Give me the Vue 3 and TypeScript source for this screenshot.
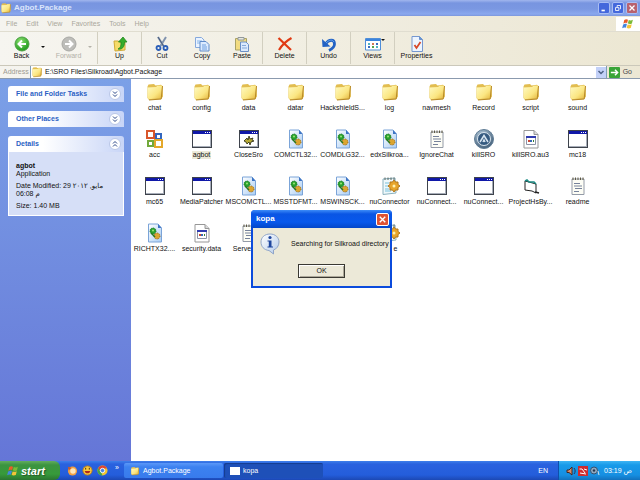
<script setup lang="ts">
import { ref } from 'vue'

interface Tool {
  label: string
  icon: string
  arrow?: boolean
  disabled?: boolean
}

interface FileItem {
  name: string
  icon: string
  place?: string
}

const menus = ['File', 'Edit', 'View', 'Favorites', 'Tools', 'Help']

const groups: Tool[][] = [
  [
    { label: 'Back', icon: 'back', arrow: true },
    { label: 'Forward', icon: 'forward', arrow: true, disabled: true },
  ],
  [{ label: 'Up', icon: 'up' }],
  [
    { label: 'Cut', icon: 'cut' },
    { label: 'Copy', icon: 'copy' },
    { label: 'Paste', icon: 'paste' },
  ],
  [{ label: 'Delete', icon: 'delete' }],
  [{ label: 'Undo', icon: 'undo' }],
  [{ label: 'Views', icon: 'views', arrow: true }],
  [{ label: 'Properties', icon: 'properties' }],
]

const files: FileItem[] = [
  { name: 'chat', icon: 'folder' },
  { name: 'config', icon: 'folder' },
  { name: 'data', icon: 'folder' },
  { name: 'datar', icon: 'folder' },
  { name: 'HackshieldS...', icon: 'folder' },
  { name: 'log', icon: 'folder' },
  { name: 'navmesh', icon: 'folder' },
  { name: 'Record', icon: 'folder' },
  { name: 'script', icon: 'folder' },
  { name: 'sound', icon: 'folder' },
  { name: 'acc', icon: 'office' },
  { name: 'agbot', icon: 'program' },
  { name: 'CloseSro', icon: 'closer' },
  { name: 'COMCTL32...', icon: 'dll' },
  { name: 'COMDLG32...', icon: 'dll' },
  { name: 'edxSilkroa...', icon: 'dll' },
  { name: 'IgnoreChat', icon: 'note' },
  { name: 'killSRO', icon: 'autoit' },
  { name: 'killSRO.au3', icon: 'unknown' },
  { name: 'mc18', icon: 'program' },
  { name: 'mc65', icon: 'program' },
  { name: 'MediaPatcher', icon: 'program' },
  { name: 'MSCOMCTL...', icon: 'dll' },
  { name: 'MSSTDFMT...', icon: 'dll' },
  { name: 'MSWINSCK...', icon: 'dll' },
  { name: 'nuConnector', icon: 'config' },
  { name: 'nuConnect...', icon: 'program' },
  { name: 'nuConnect...', icon: 'program' },
  { name: 'ProjectHsBy...', icon: 'project' },
  { name: 'readme', icon: 'note' },
  { name: 'RICHTX32....', icon: 'dll' },
  { name: 'security.data', icon: 'unknown' },
  { name: 'Serve', icon: 'note', place: 'lead' },
  { name: 'e', icon: 'config', place: 'trail' },
]

const selected = ref('agbot')
const address = ref('E:\\SRO Files\\Silkroad\\Agbot.Package')
const dialogOpen = ref(true)
</script>

<template>
  <div class="screen">
    <svg class="sprites" aria-hidden="true">
      <defs>
        <linearGradient id="gFolder" x1="0" y1="0" x2="1" y2="1">
          <stop offset="0" stop-color="#fffbc4" />
          <stop offset="0.6" stop-color="#fbe682" />
          <stop offset="1" stop-color="#e3b53c" />
        </linearGradient>
        <radialGradient id="gGreen" cx="0.4" cy="0.3" r="0.7">
          <stop offset="0" stop-color="#8be070" />
          <stop offset="1" stop-color="#1f9a1c" />
        </radialGradient>
        <linearGradient id="gPage" x1="0" y1="0" x2="1" y2="1">
          <stop offset="0" stop-color="#ffffff" />
          <stop offset="1" stop-color="#a9cdf4" />
        </linearGradient>
        <radialGradient id="gSteel" cx="0.4" cy="0.3" r="0.8">
          <stop offset="0" stop-color="#b9cfe0" />
          <stop offset="1" stop-color="#37536e" />
        </radialGradient>
        <linearGradient id="gBubble" x1="0" y1="0" x2="1" y2="1">
          <stop offset="0" stop-color="#ffffff" />
          <stop offset="1" stop-color="#b4cbea" />
        </linearGradient>
        <symbol id="folder" viewBox="0 0 20 20">
          <path d="M2.500 4.500L3.500 2.500L9 2L10.500 3.500L16 2.800L17.500 4L18 14.500L16 17.200L4 18L2.500 16Z" fill="#e2bd50" />
          <path d="M2.500 5.500L11 5L12.500 3.800L17 3.600L16.500 15.800L4 17.300L2.700 16Z" fill="url(#gFolder)" />
          <path d="M17.500 4L16.200 17L4 18" fill="none" stroke="#b88a27" />
        </symbol>
        <symbol id="program" viewBox="0 0 20 20">
          <path d="M0 1H20V19H0Z" fill="#3e434c" />
          <path d="M1 2H19V18H1Z" fill="#a7adb8" />
          <path d="M1 5H18V17H1Z" fill="#fff" />
          <path d="M1 2H19V5H1Z" fill="#1018a8" />
          <path d="M13 3h1v1h-1zM15 3h1v1h-1zM17 3h1v1h-1z" fill="#fff" />
        </symbol>
        <symbol id="closer" viewBox="0 0 20 20">
          <use href="#program" />
          <path d="M5 12L8 9L9 11L10 7L11 10L14 9L13 11L15 12L12 13L11 16L10 13L8 15L7 13Z" fill="#b5aa35" stroke="#24240c" stroke-width="0.800" />
        </symbol>
        <symbol id="dll" viewBox="0 0 20 20">
          <path d="M3.500 1H13L16.500 5V19H3.500Z" fill="url(#gPage)" stroke="#7ba4d8" />
          <path d="M13 1V5H16.500Z" fill="#3d74c4" />
          <circle cx="8" cy="8" r="3" fill="#28a22c" stroke="#146c23" stroke-dasharray="1 1" />
          <circle cx="12" cy="13" r="3" fill="#dca530" stroke="#8e6115" stroke-dasharray="1 1" />
          <circle cx="8" cy="7.500" r="1" fill="#9ee37a" />
          <path d="M6 10L10 14" stroke="#26781f" stroke-width="1.500" />
        </symbol>
        <symbol id="office" viewBox="0 0 20 20">
          <g fill="none" stroke-width="2">
            <rect x="2" y="2" width="7" height="7" stroke="#d8562b" />
            <rect x="11" y="5" width="5" height="5" stroke="#3266be" />
            <rect x="3" y="12" width="5" height="5" stroke="#72a93b" />
            <rect x="10" y="11" width="7" height="7" stroke="#e4a82b" />
          </g>
        </symbol>
        <symbol id="note" viewBox="0 0 20 20">
          <path d="M4 3H16V18.500H4Z" fill="#fdfdf5" stroke="#949ba7" />
          <path d="M5 1.500V4M7.500 1.500V4M10 1.500V4M12.500 1.500V4M15 1.500V4" stroke="#5c5741" />
          <path d="M6 7.500H12M6 10H14M7 12.500H14M6 15.500H11" stroke="#76829b" />
        </symbol>
        <symbol id="autoit" viewBox="0 0 20 20">
          <circle cx="10" cy="10" r="9.500" fill="url(#gSteel)" stroke="#607d96" />
          <circle cx="10" cy="10" r="6.500" fill="#355a80" stroke="#dbe6ef" />
          <path d="M6 13L10 6.500L14 13M9 13L10 11L11 13" fill="none" stroke="#d8e5f0" stroke-width="1.500" />
        </symbol>
        <symbol id="unknown" viewBox="0 0 20 20">
          <path d="M3 1.500H13L17 5.500V19H3Z" fill="#fff" stroke="#979797" />
          <path d="M13 1.500V5.500H17" fill="#d9d9d9" stroke="#979797" />
          <path d="M5.500 7.500H14.500V15.500H5.500Z" fill="#fff" stroke="#8c93a6" />
          <path d="M5 7H15V9H5Z" fill="#303baf" />
          <path d="M7 11h2v2H7z" fill="#ca4937" />
          <path d="M9 11h2v2H9z" fill="#3468b8" />
          <path d="M12 11h1v2h-1z" fill="#397f35" />
        </symbol>
        <symbol id="config" viewBox="0 0 20 20">
          <path d="M3 3L15 2L16 17L3 18.500Z" fill="#eff8fb" stroke="#8ab1bf" />
          <path d="M5 1.500V4M8 1.500V4M11 1.500V4M14 1.500V4" stroke="#5b6661" />
          <path d="M5 7H9M5 10H8M5 13H9M5 15H11" stroke="#79c1dc" />
          <path d="M14 4L15.500 6H18V8.500L20 10L18 11.500V14H15.500L14 16L12.500 14H10V11.500L8 10L10 8.500V6H12.500Z" fill="#e7a52b" stroke="#af761d" />
          <circle cx="14" cy="10" r="1.500" fill="#fff1b0" />
        </symbol>
        <symbol id="project" viewBox="0 0 20 20">
          <path d="M4 5L8 6L15 8V17L11 15L4 14Z" fill="#fff" stroke="#222" />
          <path d="M4 5L6 4L8 6L13 6L15 8" fill="none" stroke="#1a8a83" stroke-width="1.500" />
          <path d="M14 16L18 17" stroke="#222" stroke-width="1.500" />
        </symbol>
        <symbol id="back" viewBox="0 0 16 16">
          <circle cx="8" cy="8" r="7" fill="url(#gGreen)" stroke="#4c9f43" />
          <path d="M12 8H5M8 4.500L4.500 8L8 11.500" fill="none" stroke="#fff" stroke-width="2" />
        </symbol>
        <symbol id="forward" viewBox="0 0 16 16">
          <circle cx="8" cy="8" r="7" fill="#bdbdb9" stroke="#a8a8a4" />
          <path d="M4 8H11M8 4.500L11.500 8L8 11.500" fill="none" stroke="#fff" stroke-width="2" />
        </symbol>
        <symbol id="up" viewBox="0 0 16 16">
          <path d="M2 5H6L8 6H13V14L3 15Z" fill="#f5dc69" stroke="#cfaa38" />
          <path d="M6 13C9 12 9 9 9 6H6.500L11 1L15 6H12.500C12.500 11 10 14 6 13Z" fill="#35ad2b" stroke="#218820" stroke-width="0.800" />
        </symbol>
        <symbol id="cut" viewBox="0 0 16 16">
          <path d="M4 1L9.500 10M12 1L6.500 10" stroke="#8193ae" stroke-width="2" />
          <path d="M4 1L9.500 10" stroke="#4a5d7c" />
          <circle cx="4.500" cy="12" r="2" fill="none" stroke="#2b5fb8" stroke-width="1.800" />
          <circle cx="11.500" cy="12" r="2" fill="none" stroke="#2b5fb8" stroke-width="1.800" />
        </symbol>
        <symbol id="copy" viewBox="0 0 16 16">
          <path d="M1.500 1.500H7.500L10 4V11.500H1.500Z" fill="#eaf3ff" stroke="#86a9dc" />
          <path d="M3 5H8M3 7H8" stroke="#86b6eb" />
          <path d="M6 5.500H12L15 8.500V15H6Z" fill="#dcebff" stroke="#5f8bc9" />
          <path d="M8 9H12M8 11H13M8 13H13" stroke="#6ea0df" />
        </symbol>
        <symbol id="paste" viewBox="0 0 16 16">
          <path d="M1.500 2.500H12.500V14H1.500Z" fill="#f2dc81" stroke="#a9a267" />
          <path d="M4 1.500H10V4H4Z" fill="#e6e7df" stroke="#92999b" />
          <path d="M6.500 6H12L14.500 8.500V15.500H6.500Z" fill="#dbeafd" stroke="#6a8fc6" />
          <path d="M8 9.500H12M8 12H13" stroke="#85a9d8" />
        </symbol>
        <symbol id="delete" viewBox="0 0 16 16">
          <path d="M1.500 2L14 14M14.500 2C9 5 5 9 2 14" fill="none" stroke="#e03a13" stroke-width="2.200" />
        </symbol>
        <symbol id="undo" viewBox="0 0 16 16">
          <path d="M4.500 8C8 3 13.500 3 13.500 8C13.500 11 11 13 8 14.500" fill="none" stroke="#2262c4" stroke-width="2.800" />
          <path d="M1 3L1.500 11L9.500 10.500Z" fill="#2262c4" />
          <path d="M5 7C8 4 11 3 13 6" fill="none" stroke="#65a4ed" />
        </symbol>
        <symbol id="views" viewBox="0 0 16 16">
          <path d="M0.500 2.500H15.500V14H0.500Z" fill="#fff" stroke="#508ed8" />
          <path d="M1 3H15V5H1Z" fill="#3a84dd" />
          <path d="M3 7h2v2H3zM11 10h2v2h-2z" fill="#52b4c4" />
          <path d="M7 7h2v2H7z" fill="#d37656" />
          <path d="M11 7h2v2h-2zM3 10h2v2H3z" fill="#376bc0" />
          <path d="M7 10h2v2H7z" fill="#54a34a" />
        </symbol>
        <symbol id="properties" viewBox="0 0 16 16">
          <path d="M3 0.500H10.500L13.500 3.500V15.500H3Z" fill="#edf5ff" stroke="#7597cf" />
          <path d="M10.500 0.500V3.500H13.500" fill="#6195d8" stroke="#6c91c9" />
          <path d="M5.500 9L7.500 12L11.500 6" fill="none" stroke="#d74929" stroke-width="1.800" />
        </symbol>
        <symbol id="flag" viewBox="0 0 16 16">
          <path d="M3 2.500C5 1 6.500 1.500 8 2.200L6.800 7C5 6.200 4 6.300 1.800 7.500Z" fill="#ea5c2a" />
          <path d="M9 2.600C11 3.500 12.500 3.300 14.500 2.300L13.200 7.200C11 8.300 9.500 8 7.800 7.300Z" fill="#7bbb37" />
          <path d="M1.500 8.700C3.500 7.400 5 7.400 6.500 8L5.200 13C3.500 12.300 2 12.500 0.200 13.500Z" fill="#4386dd" />
          <path d="M7.500 8.500C9.500 9.500 11 9.200 13 8.400L11.700 13.300C9.500 14.300 8 14 6.200 13.300Z" fill="#f4c438" />
        </symbol>
      </defs>
    </svg>

    <header class="titlebar">
      <svg class="i12"><use href="#folder" /></svg>
      <h1>Agbot.Package</h1>
      <button class="cap" aria-label="Minimize">
        <svg viewBox="0 0 12 12"><path d="M3 9H7" stroke="#fff" stroke-width="2" /></svg>
      </button>
      <button class="cap" aria-label="Restore">
        <svg viewBox="0 0 12 12"><path d="M5 5V3H9V7H8M3 5.500H7V9H3Z" fill="none" stroke="#fff" /></svg>
      </button>
      <button class="cap cap-close" aria-label="Close">
        <svg viewBox="0 0 12 12"><path d="M3 3L9 9M9 3L3 9" stroke="#fff" stroke-width="1.500" /></svg>
      </button>
    </header>

    <nav class="menubar">
      <button v-for="m in menus" :key="m">{{ m }}</button>
      <span class="brand"><svg class="i12"><use href="#flag" /></svg></span>
    </nav>

    <div class="toolbar">
      <div v-for="(group, gi) in groups" :key="gi" class="group">
        <button
          v-for="tool in group"
          :key="tool.label"
          class="tool"
          :class="{ off: tool.disabled, wide: gi !== 2, views: tool.icon === 'views' }"
          :disabled="tool.disabled"
        >
          <svg class="i16"><use :href="'#' + tool.icon" /></svg>
          <span>{{ tool.label }}</span>
          <i v-if="tool.arrow" class="drop"></i>
        </button>
      </div>
    </div>

    <div class="address">
      <label for="addr">Address</label>
      <div class="field">
        <svg class="i12"><use href="#folder" /></svg>
        <input id="addr" v-model="address" type="text" spellcheck="false" />
        <button class="combo" aria-label="Show addresses">
          <svg viewBox="0 0 10 10"><path d="M2.500 4L5 6.500L7.500 4" fill="none" stroke="#4d6185" stroke-width="1.500" /></svg>
        </button>
      </div>
      <button class="go">
        <svg viewBox="0 0 12 12">
          <rect width="12" height="12" rx="1" fill="#39a539" />
          <path d="M2 6H9M6.500 3L9.500 6L6.500 9" fill="none" stroke="#fff" stroke-width="1.500" />
        </svg>
        <span>Go</span>
      </button>
    </div>

    <main class="body">
      <aside class="side">
        <section v-for="t in ['File and Folder Tasks', 'Other Places', 'Details']" :key="t" class="panel">
          <button class="head">
            <span>{{ t }}</span>
            <svg viewBox="0 0 12 12">
              <circle cx="6" cy="6" r="5.500" fill="#fff" stroke="#b9c6e6" />
              <path
                :d="t === 'Details' ? 'M4 5.500L6 3.500L8 5.500M4 8.500L6 6.500L8 8.500' : 'M4 3.500L6 5.500L8 3.500M4 6.500L6 8.500L8 6.500'"
                fill="none"
                stroke="#2b4687"
              />
            </svg>
          </button>
          <div v-if="t === 'Details'" class="info">
            <b>agbot</b>
            <p>Application</p>
            <p class="gap">Date Modified: 29 مايو, ٢٠١٢</p>
            <p>06:08 م</p>
            <p class="gap">Size: 1.40 MB</p>
          </div>
        </section>
      </aside>

      <div class="files">
        <button
          v-for="(f, i) in files"
          :key="i"
          class="file"
          :class="[f.place, { selected: f.name === selected }]"
          @click="selected = f.name"
        >
          <svg class="i20"><use :href="'#' + f.icon" /></svg>
          <span>{{ f.name }}</span>
        </button>
      </div>
    </main>

    <footer class="taskbar">
      <button class="start">
        <svg class="i12"><use href="#flag" /></svg>
        <span>start</span>
      </button>
      <div class="quick">
        <svg viewBox="0 0 12 12">
          <circle cx="6" cy="6.500" r="5" fill="#f0a043" />
          <circle cx="6.500" cy="6.500" r="3" fill="#fbe5bb" />
          <path d="M1 2L5 3L2 6Z" fill="#c9592a" />
        </svg>
        <svg viewBox="0 0 12 12">
          <circle cx="6" cy="6" r="5" fill="#f8c83c" stroke="#b97b1c" />
          <path d="M3 6.500H9C9 10 3 10 3 6.500Z" fill="#b02a1c" />
          <path d="M4 3V5M8 3V5" stroke="#43250c" />
        </svg>
        <svg viewBox="0 0 12 12">
          <circle cx="6" cy="6" r="5.500" fill="#f2c62f" />
          <path d="M1.200 3.300A5.500 5.500 0 0 1 11 3.700H6L4 7.500Z" fill="#de4634" />
          <path d="M1.200 3.300L4.500 8L6 11.500A5.500 5.500 0 0 1 1.200 3.300Z" fill="#41a351" />
          <circle cx="6" cy="6" r="2.400" fill="#4684e3" stroke="#fff" />
        </svg>
        <span>»</span>
      </div>
      <button class="task">
        <svg class="i10"><use href="#folder" /></svg>
        <span>Agbot.Package</span>
      </button>
      <button class="task active">
        <svg class="i10" viewBox="0 0 10 10"><path d="M0 1H10V9H0Z" fill="#fff" /></svg>
        <span>kopa</span>
      </button>
      <span class="lang">EN</span>
      <div class="tray">
        <svg viewBox="0 0 10 10">
          <path d="M1 4H3L6 1V9L3 6.500H1Z" fill="#d98b66" stroke="#462722" />
          <path d="M8 2C9.500 4 9.500 6 8 8" fill="none" stroke="#263457" />
        </svg>
        <svg viewBox="0 0 10 10">
          <rect width="10" height="10" fill="#cf2c2f" />
          <path d="M1.500 3H4L7 7M6 3L9 4M2 7L8 8" fill="none" stroke="#fff" />
        </svg>
        <svg viewBox="0 0 10 10">
          <circle cx="4" cy="4.500" r="3.500" fill="#8fa7bf" stroke="#35516f" />
          <circle cx="4" cy="4.500" r="1.200" fill="#26384e" />
          <path d="M8 5L9 9" stroke="#cde1ef" />
        </svg>
        <time>03:19 ص</time>
      </div>
    </footer>

    <div v-if="dialogOpen" class="dialog" role="alertdialog" aria-labelledby="dlg-title">
      <div class="dlg-bar">
        <h2 id="dlg-title">kopa</h2>
        <button class="dlg-x" aria-label="Close" @click="dialogOpen = false">
          <svg viewBox="0 0 12 12"><path d="M3 3L9 9M9 3L3 9" stroke="#fff" stroke-width="1.500" /></svg>
        </button>
      </div>
      <div class="dlg-body">
        <div class="message">
          <svg class="bubble" viewBox="0 0 20 22">
            <path d="M10 1C15.500 1 19 4.500 19 9C19 13 16.500 16 13.500 17V21L9 17.500C4 17 1 13.500 1 9C1 4.500 4.500 1 10 1Z" fill="url(#gBubble)" stroke="#90a5c8" />
            <circle cx="10" cy="4.500" r="1.600" fill="#1e469e" />
            <path d="M7.500 7.500H11.500V13.500H13V14.500H7.500V13.500H8.800V8.500H7.500Z" fill="#1e469e" />
          </svg>
          <p>Searching for Silkroad directory</p>
        </div>
        <button class="ok" @click="dialogOpen = false">OK</button>
      </div>
    </div>
  </div>
</template>

<style>
body {
  margin: 0;
}
</style>

<style scoped>
.screen {
  position: relative;
  display: flex;
  flex-direction: column;
  min-height: 100vh;
  background: #fff;
  color: #111;
  font: 7px/8px "Liberation Sans", "DejaVu Sans", sans-serif;
  overflow: hidden;
}
.sprites {
  position: absolute;
  width: 0;
  height: 0;
}
svg {
  display: block;
  flex: none;
}
button {
  margin: 0;
  padding: 0;
  border: 0;
  background: none;
  color: inherit;
  font: inherit;
}
p, h1, h2 {
  margin: 0;
}
.i10 { width: 10px; height: 10px; }
.i12 { width: 12px; height: 12px; }
.i16 { width: 16px; height: 16px; }
.i20 { width: 20px; height: 20px; }

.titlebar {
  display: flex;
  align-items: center;
  gap: 2px;
  height: 16px;
  padding: 0 2px 0 0;
  background: linear-gradient(#a1b6ee, #7895e0 3px, #7b98e2 9px, #8aa8ee 14px, #7c97dc);
}
.titlebar h1 {
  flex: 1;
  color: #dbe5fb;
  font-size: 8px;
  line-height: 10px;
}
.cap {
  width: 12px;
  height: 12px;
  border: 1px solid #a9bdf3;
  border-radius: 2px;
  background: #4468dc;
}
.cap svg {
  width: 10px;
  height: 10px;
}
.cap-close {
  background: #b8626f;
}

.menubar {
  display: flex;
  align-items: center;
  gap: 9px;
  height: 15px;
  padding-left: 6px;
  background: linear-gradient(90deg, #f5f4ef, #ece7d4);
  color: #aaa89c;
}
.brand {
  display: flex;
  align-items: center;
  justify-content: center;
  width: 24px;
  height: 14px;
  margin-left: auto;
  background: #fff;
}

.toolbar {
  display: flex;
  height: 34px;
  border-top: 1px solid #e0ddd0;
  box-sizing: border-box;
  background: linear-gradient(90deg, #f6f5f0, #ece7d3);
}
.group {
  display: flex;
  align-items: center;
  height: 32px;
}
.group + .group {
  border-left: 1px solid #d2cfc0;
}
.group:first-child {
  gap: 4px;
  padding-right: 7px;
}
.tool {
  position: relative;
  display: flex;
  flex-direction: column;
  align-items: center;
  width: 40px;
}
.tool.wide {
  width: 43px;
}
.off {
  color: #b3b1a8;
}
.drop {
  position: absolute;
  top: 10px;
  right: -2px;
  border: 2px solid transparent;
  border-top-color: currentColor;
}
.views .drop {
  top: 3px;
  right: 9px;
}

.address {
  display: flex;
  align-items: center;
  gap: 2px;
  height: 14px;
  padding: 0 8px 0 3px;
  box-sizing: border-box;
  border-top: 1px solid #cbc8ba;
  border-bottom: 1px solid #8b9aae;
  background: linear-gradient(90deg, #f5f4ef, #ece7d4);
}
.address label {
  width: 25px;
  color: #9c9a90;
}
.field {
  display: flex;
  flex: 1;
  align-items: center;
  gap: 2px;
  border: 1px solid #7f9db9;
  border-width: 0 1px;
  background: #fff;
}
.field input {
  flex: 1;
  min-width: 0;
  height: 12px;
  padding: 0;
  border: 0;
  outline: 0;
  background: none;
  color: #111;
  font: inherit;
  line-height: 12px;
}
.combo {
  width: 10px;
  height: 11px;
  background: #c3d1f8;
}
.combo svg {
  width: 10px;
  height: 10px;
}
.go {
  display: flex;
  align-items: center;
  gap: 3px;
  color: #444;
}
.go svg {
  width: 11px;
  height: 11px;
}

.body {
  display: flex;
  flex: 1;
}
.side {
  width: 131px;
  padding: 7px 7px 0 8px;
  box-sizing: border-box;
  background: linear-gradient(#7ba0e7, #6576d7);
}
.panel {
  margin-bottom: 9px;
}
.head {
  display: flex;
  align-items: center;
  justify-content: space-between;
  width: 100%;
  height: 16px;
  padding: 0 3px 0 8px;
  border-radius: 3px 3px 0 0;
  background: linear-gradient(90deg, #fff 30%, #c8d5f7);
  color: #2b5fc4;
  font-weight: bold;
}
.head svg {
  width: 12px;
  height: 12px;
}
.info {
  padding: 10px 7px 5px;
  border: 1px solid #fff;
  border-top: 0;
  background: #d6dff7;
  white-space: nowrap;
}
.info b {
  display: block;
}
.info .gap {
  margin-top: 4px;
}

.files {
  flex: 1;
  display: grid;
  grid-template-columns: repeat(auto-fill, 47px);
  grid-auto-rows: 47px;
  padding-top: 3px;
  padding-right: 20px;
}
.file {
  display: flex;
  flex-direction: column;
  align-items: center;
  gap: 2px;
  white-space: nowrap;
}
.file span {
  padding: 0 1px;
}
.lead span {
  padding-right: 14px;
}
.trail {
  grid-column: 6;
}
.trail span {
  padding-left: 13px;
}
.selected span {
  background: #ece9d8;
}

.taskbar {
  display: flex;
  align-items: center;
  height: 19px;
  background: linear-gradient(#3f80ea, #2a62df 3px, #245ddb 14px, #1c48b4);
  color: #fff;
}
.start {
  display: flex;
  align-items: center;
  gap: 2px;
  width: 60px;
  height: 19px;
  padding-left: 7px;
  box-sizing: border-box;
  border-radius: 0 6px 6px 0;
  background: linear-gradient(#63ad5f, #3b9440 4px, #379a3b 13px, #2a7431);
  font: italic bold 11px/14px "Liberation Sans", sans-serif;
  text-shadow: 1px 1px 1px #24552a;
}
.quick {
  display: flex;
  align-items: center;
  gap: 4px;
  width: 64px;
  padding-left: 7px;
  box-sizing: border-box;
}
.quick svg {
  width: 11px;
  height: 11px;
}
.quick span {
  margin: -6px 0 0 3px;
}
.task {
  display: flex;
  align-items: center;
  gap: 3px;
  width: 99px;
  height: 15px;
  margin-right: 1px;
  padding-left: 6px;
  border-radius: 2px;
  background: linear-gradient(#5b98f8, #3c81f0 4px, #387bec);
}
.task.active {
  background: #1e50b8;
  box-shadow: inset 1px 1px 1px #153c8e;
}
.lang {
  margin: 0 10px 0 auto;
}
.tray {
  display: flex;
  align-items: center;
  gap: 2px;
  height: 19px;
  padding: 0 8px 0 7px;
  border-left: 1px solid #0e4fac;
  background: linear-gradient(#3eb4f4, #189ae9 4px, #168fe2 14px, #1271bd);
}
.tray svg {
  width: 10px;
  height: 10px;
}
.tray time {
  padding-left: 2px;
}

.dialog {
  position: absolute;
  top: 210px;
  left: 251px;
  width: 141px;
  box-sizing: border-box;
  padding: 0 2px 2px;
  border-radius: 4px 4px 0 0;
  background: #0b4bdc;
}
.dlg-bar {
  display: flex;
  align-items: center;
  justify-content: space-between;
  height: 18px;
  margin: 0 -2px;
  padding: 0 3px 0 5px;
  border-radius: 4px 4px 0 0;
  background: linear-gradient(#3d8cf8, #0a55e4 4px, #0758ec 12px, #0346c8);
}
.dlg-bar h2 {
  color: #fff;
  font-size: 8px;
  line-height: 10px;
}
.dlg-x {
  width: 13px;
  height: 13px;
  border: 1px solid #fff;
  border-radius: 2px;
  background: #df5333;
}
.dlg-x svg {
  width: 11px;
  height: 11px;
}
.dlg-body {
  display: flex;
  flex-direction: column;
  align-items: center;
  gap: 9px;
  padding: 5px 0 8px;
  background: #ece9d8;
}
.message {
  display: flex;
  align-self: stretch;
  gap: 11px;
  padding-left: 7px;
  white-space: nowrap;
}
.message p {
  padding-top: 7px;
}
.bubble {
  width: 20px;
  height: 22px;
}
.ok {
  width: 47px;
  height: 14px;
  border: 1px solid #3a3932;
  box-shadow: inset 1px 1px #fff, inset -1px -1px #aca899;
}
</style>
